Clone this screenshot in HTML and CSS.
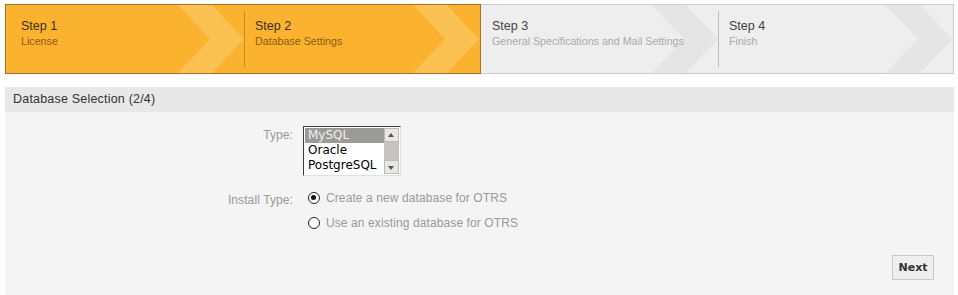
FILE: index.html
```html
<!DOCTYPE html>
<html lang="en">

<head>
  <meta charset="UTF-8">
  <title>OTRS Installer - Database Selection</title>
  <link rel="stylesheet" href="styles.css">
</head>

<body>
  <div class="steps">
    <div class="group done">
      <div class="step">
        <div class="title">Step 1</div>
        <div class="sub">License</div>
        <svg class="chevron" viewBox="0 0 66 68" preserveAspectRatio="none">
          <polygon points="0,0 34,0 66,34 34,68 0,68 32,34" />
        </svg>
      </div>
      <div class="step">
        <div class="title">Step 2</div>
        <div class="sub">Database Settings</div>
        <svg class="chevron" viewBox="0 0 66 68" preserveAspectRatio="none">
          <polygon points="0,0 34,0 66,34 34,68 0,68 32,34" />
        </svg>
      </div>
    </div>
    <div class="group todo">
      <div class="step">
        <div class="title">Step 3</div>
        <div class="sub">General Specifications and Mail Settings</div>
        <svg class="chevron" viewBox="0 0 66 68" preserveAspectRatio="none">
          <polygon points="0,0 34,0 66,34 34,68 0,68 32,34" />
        </svg>
      </div>
      <div class="step">
        <div class="title">Step 4</div>
        <div class="sub">Finish</div>
        <svg class="chevron" viewBox="0 0 66 68" preserveAspectRatio="none">
          <polygon points="0,0 34,0 66,34 34,68 0,68 32,34" />
        </svg>
      </div>
    </div>
  </div>

  <div class="panel">
    <div class="panelHeader">Database Selection (2/4)</div>
    <form class="panelBody">
      <div class="row">
        <label class="label">Type:</label>
        <div class="listbox">
          <ul class="options">
            <li class="selected">MySQL</li>
            <li>Oracle</li>
            <li>PostgreSQL</li>
          </ul>
          <div class="scrollbar">
            <span class="arrow up"></span>
            <span class="track"></span>
            <span class="arrow down"></span>
          </div>
        </div>
      </div>
      <div class="row radios">
        <label class="label">Install Type:</label>
        <div class="choices">
          <label class="choice"><input type="radio" name="installType" checked> Create a new database for OTRS</label>
          <label class="choice"><input type="radio" name="installType"> Use an existing database for OTRS</label>
        </div>
      </div>
      <div class="actions">
        <button type="button" class="nextBtn">Next</button>
      </div>
    </form>
  </div>
</body>

</html>
```

FILE: styles.css
```css
html,
body {
  margin: 0;
  background-color: #fff;
  font-family: "Liberation Sans", Arial, sans-serif;
  font-size: 12px;
}

.steps {
  display: flex;
  margin: 4px 4px 0 5px;
  height: 70px;
}

.group {
  display: flex;
  box-sizing: border-box;
  height: 70px;
}

.group.done {
  width: 476px;
  background-color: #fbb22f;
  border: 1px solid #a86d2c;
}

.group.todo {
  flex: 1;
  background-color: #eeeeee;
  border: 1px solid #cccccc;
  border-left: none;
}

.step {
  position: relative;
  box-sizing: border-box;
  flex: 1;
  padding: 14px 0 0 10px;
  overflow: hidden;
}

.step:first-child::after {
  content: "";
  position: absolute;
  right: 0;
  top: 6px;
  bottom: 6px;
  width: 1px;
}

.done .step:first-child {
  flex: 0 0 239px;
  padding-left: 15px;
}

.todo .step:first-child {
  flex: 0 0 238px;
  padding-left: 11px;
}

.done .step:first-child::after {
  background-color: #c88a2a;
}

.todo .step:first-child::after {
  background-color: #bdbdbd;
}

.title,
.sub {
  position: relative;
  z-index: 1;
  line-height: 15px;
  white-space: nowrap;
}

.title {
  font-size: 12.5px;
  color: #3b3024;
}

.sub {
  font-size: 10.7px;
  color: #8d5a16;
}

.todo .title {
  color: #444444;
}

.todo .sub {
  color: #aaaaaa;
}

.chevron {
  position: absolute;
  right: 1px;
  top: 0;
  width: 66px;
  height: 68px;
}

.done .chevron polygon {
  fill: #fbc152;
}

.todo .chevron polygon {
  fill: #e5e5e5;
}

.panel {
  margin: 13px 4px 0 5px;
  background-color: #f4f4f4;
}

.panelHeader {
  background-color: #e8e8e8;
  height: 25px;
  line-height: 25px;
  padding-left: 8px;
  color: #333333;
  font-size: 12.5px;
  letter-spacing: 0.2px;
}

.panelBody {
  padding: 14px 20px 18px 0;
  margin: 0;
}

.row {
  display: flex;
  align-items: flex-start;
}

.label {
  width: 288px;
  padding-right: 10px;
  text-align: right;
  color: #999999;
  letter-spacing: 0.1px;
}

.row:first-child .label {
  padding-top: 2px;
}

.listbox {
  display: flex;
  width: 98px;
  height: 50px;
  box-sizing: border-box;
  background-color: #fff;
  border: 1px solid;
  border-color: #3c3c3c #e0e0e0 #e0e0e0 #3c3c3c;
  padding: 1px;
}

.options {
  list-style: none;
  margin: 0;
  padding: 0;
  flex: 1;
  font-family: "DejaVu Sans", sans-serif;
  font-size: 12px;
}

.options li {
  height: 15px;
  line-height: 15px;
  padding-left: 3px;
  color: #000;
}

.options li.selected {
  background-color: #9c9a96;
  color: #f0f0f0;
}

.scrollbar {
  display: flex;
  flex-direction: column;
  width: 15px;
  background-color: #c5c3bf;
}

.arrow {
  position: relative;
  height: 14px;
  box-sizing: border-box;
  background-color: #e8e7e5;
  border: 1px solid #bdbbb7;
}

.arrow::before {
  content: "";
  position: absolute;
  left: 3px;
  border-left: 3px solid transparent;
  border-right: 3px solid transparent;
}

.arrow.up::before {
  top: 4px;
  border-bottom: 4px solid #555;
}

.arrow.down::before {
  top: 5px;
  border-top: 4px solid #555;
}

.track {
  flex: 1;
}

.radios {
  margin-top: 14px;
}

.radios .label {
  padding-top: 3px;
}

.choices {
  display: flex;
  flex-direction: column;
  gap: 10px;
  padding-left: 5px;
}

.choice {
  display: flex;
  align-items: center;
  color: #999999;
  height: 15px;
  letter-spacing: 0.1px;
}

.choice input {
  appearance: none;
  width: 12px;
  height: 12px;
  margin: 0 6px 0 0;
  border: 1.5px solid #222;
  border-radius: 50%;
  background-color: #fff;
  position: relative;
}

.choice input:checked::after {
  content: "";
  position: absolute;
  left: 2px;
  top: 2px;
  width: 5px;
  height: 5px;
  border-radius: 50%;
  background-color: #111;
}

.actions {
  display: flex;
  justify-content: flex-end;
  margin-top: 25px;
}

.nextBtn {
  width: 42px;
  height: 25px;
  padding: 0;
  background-color: #eeeeee;
  border: 1px solid #c8c8c8;
  color: #333333;
  font-family: "DejaVu Sans", sans-serif;
  font-size: 11px;
  font-weight: bold;
  cursor: pointer;
}
```
